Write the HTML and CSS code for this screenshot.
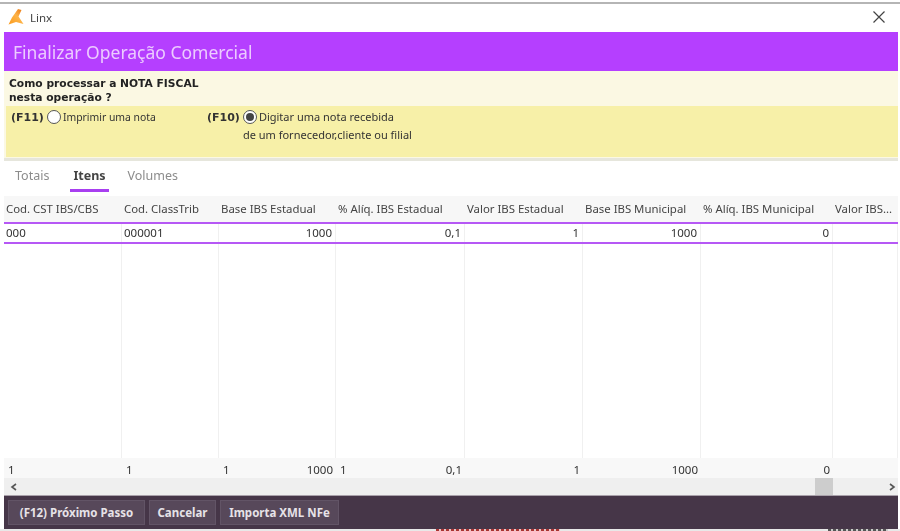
FILE: index.html
```html
<!DOCTYPE html>
<html lang="pt-BR">
<head>
<meta charset="utf-8">
<title>Linx</title>
<link rel="stylesheet" href="styles.css">
</head>
<body>
<div class="window">
  <div class="titlebar">
    <div class="title-left">
      <svg class="logo" width="16" height="16" viewBox="0 0 16 16"><defs><linearGradient id="lg" x1="0" y1="1" x2="1" y2="0"><stop offset="0" stop-color="#fb9a1c"/><stop offset=".55" stop-color="#fdb347"/><stop offset="1" stop-color="#e8700f"/></linearGradient></defs><path d="M10 0 L13.5 1 L10.5 7.5 L15.5 15 L8 13 L.5 15.5 L4 8.5 Z" fill="url(#lg)"/></svg>
      <span class="app-name">Linx</span>
    </div>
    <svg class="close" width="12" height="12" viewBox="0 0 12 12"><path d="M.5.5 11.5 11.5M11.5.5.5 11.5" stroke="#444" stroke-width="1.2" fill="none"/></svg>
  </div>
  <div class="content">
    <div class="header-band">Finalizar Operação Comercial</div>
    <div class="question">Como processar a NOTA FISCAL<br>nesta operação ?</div>
    <div class="question-tail">
      <div class="options">
        <div class="option opt-a">
          <span class="key">(F11)</span>
          <span class="radio"></span>
          <span class="opt-text opt-short">Imprimir uma nota</span>
        </div>
        <div class="option">
          <span class="key">(F10)</span>
          <span class="radio checked"></span>
          <span class="opt-text">Digitar uma nota recebida<br><span class="opt-second">de um fornecedor,cliente ou filial</span></span>
        </div>
      </div>
    </div>
    <div class="tabs">
      <span class="tab">Totais</span>
      <span class="tab active">Itens</span>
      <span class="tab">Volumes</span>
    </div>
    <div class="grid">
      <div class="row head">
        <div>Cod. CST IBS/CBS</div><div>Cod. ClassTrib</div><div>Base IBS Estadual</div><div>% Alíq. IBS Estadual</div><div>Valor IBS Estadual</div><div>Base IBS Municipal</div><div>% Alíq. IBS Municipal</div><div>Valor IBS...</div>
      </div>
      <div class="row data">
        <div>000</div><div>000001</div><div class="num">1000</div><div class="num">0,1</div><div class="num">1</div><div class="num">1000</div><div class="num">0</div><div></div>
      </div>
      <div class="row filler">
        <div></div><div></div><div></div><div></div><div></div><div></div><div></div><div></div>
      </div>
      <div class="row totals">
        <div>1</div><div>1</div><div class="split"><span>1</span><span>1000</span></div><div class="split"><span>1</span><span>0,1</span></div><div class="num">1</div><div class="num">1000</div><div class="num">0</div><div></div>
      </div>
      <div class="scrollbar">
        <svg width="8" height="8" viewBox="0 0 8 8"><path d="M6 1 2 4l4 3" stroke="#555" stroke-width="1.6" fill="none"/></svg>
        <div class="thumb"></div>
        <svg width="8" height="8" viewBox="0 0 8 8"><path d="M2 1l4 3-4 3" stroke="#555" stroke-width="1.6" fill="none"/></svg>
      </div>
    </div>
    <div class="actions">
      <button class="btn btn-next">(F12) Próximo Passo</button>
      <button class="btn btn-cancel">Cancelar</button>
      <button class="btn btn-xml">Importa XML NFe</button>
    </div>
  </div>
  <div class="behind"><span class="frag-red"></span><span class="frag-dark"></span></div>
</div>
</body>
</html>
```
FILE: styles.css
```css
* { box-sizing: border-box; }
html, body { margin: 0; padding: 0; background: #fff; }
body { width: 900px; height: 531px; overflow: hidden; font-family: "Noto Sans", sans-serif; color: #333; }
.window { height: 529px; display: flex; flex-direction: column; border-top: 2px solid #b5b5b5; margin-top: 2px; filter: blur(.45px); }
.titlebar { height: 28px; flex: none; display: flex; justify-content: space-between; align-items: center; padding: 0 15px 2px 8px; }
.title-left { display: flex; align-items: center; gap: 6px; }
.app-name { font-size: 11.5px; color: #444; }
.content { flex: none; height: 497px; margin: 0 2px 0 4px; display: flex; flex-direction: column; }
.header-band { height: 39px; flex: none; background: #b53fff; color: #eccbff; font-size: 17.5px; line-height: 41px; padding-left: 9px; }
.question { height: 35px; flex: none; background: #fbf8e3; font: bold 10.7px/14px "DejaVu Sans", sans-serif; color: #222; padding: 6px 0 0 5px; }
.question-tail { height: 52px; flex: none; background: #fbf8e3; padding-left: 2px; }
.options { height: 51px; background: #f7f0a8; display: flex; padding: 2px 0 0 5px; }
.option { display: flex; align-items: flex-start; }
.opt-a { width: 196px; }
.key { font: bold 11px/20px "DejaVu Sans", sans-serif; color: #333; }
.radio { width: 14px; height: 14px; border: 1px solid #555; border-radius: 50%; background: #fff; margin: 2px 2px 0 3px; flex: none; position: relative; }
.radio.checked::after { content: ""; position: absolute; inset: 2px; border-radius: 50%; background: #444; }
.opt-text { font-size: 11px; line-height: 18px; color: #333; }
.opt-short { font-size: 10.4px; }
.opt-second { display: inline-block; margin-left: -16px; }
.tabs { height: 38px; flex: none; border-top: 3px solid #e6e6dc; display: flex; gap: 22px; padding-left: 11px; font-size: 12.5px; color: #8c8c8c; }
.tab { height: 31px; padding: 5px 2px 0; line-height: 20px; margin-left: -2px; }
.tab.active { color: #444; font-weight: 700; border-bottom: 3px solid #a83ff0; padding: 5px 3px 0; margin: 0 -3px; }
.grid { flex: 1; min-height: 0; display: flex; flex-direction: column; font-size: 11.4px; }
.row { display: grid; grid-template-columns: 118px 97px 117px 129px 118px 118px 132px 1fr; }
.row > div { padding: 0 2px; white-space: nowrap; overflow: hidden; }
.head { height: 28px; flex: none; background: #f7f7f7; line-height: 26px; color: #444; border-bottom: 2px solid #b658f5; }
.data { height: 20px; flex: none; line-height: 17px; color: #333; border-bottom: 2px solid #b658f5; font-size: 11.5px; }
.data > div { border-right: 1px solid #f0f0f0; padding-right: 3px; }
.num { text-align: right; }
.filler { flex: 1; min-height: 0; }
.filler > div { border-right: 1px solid #f0f0f0; }
.totals { height: 20px; flex: none; background: #f8f8f8; line-height: 23px; color: #333; font-size: 11.5px; }
.totals > div { padding: 0 3px 0 4px; }
.split { display: flex; justify-content: space-between; }
.scrollbar { height: 17px; flex: none; background: #efefef; display: flex; align-items: center; padding: 0 2px 0 6px; position: relative; justify-content: space-between; }
.thumb { position: absolute; left: 811px; top: 0; bottom: 0; width: 18px; background: #cdcdcd; }
.actions { height: 34px; flex: none; background: #463648; display: flex; gap: 4px; padding: 4px 0 0 4px; border-top: 1px solid #a9a1aa; }
.btn { height: 25px; background: #57485a; color: #e6e2e7; border: 1px solid #625466; font: bold 11.5px "Noto Sans", sans-serif; padding: 0; }
.btn-next { width: 137px; }
.btn-cancel { width: 67px; }
.btn-xml { width: 119px; }
.behind { flex: none; height: 2px; background: #e8e8e8; display: flex; padding-left: 436px; }
.frag-red { width: 124px; background: repeating-linear-gradient(90deg, #a33 0 3px, #e8c8c8 3px 5px); }
.frag-dark { width: 60px; margin-left: 268px; background: repeating-linear-gradient(90deg, #555 0 3px, #ccc 3px 5px); }
```
